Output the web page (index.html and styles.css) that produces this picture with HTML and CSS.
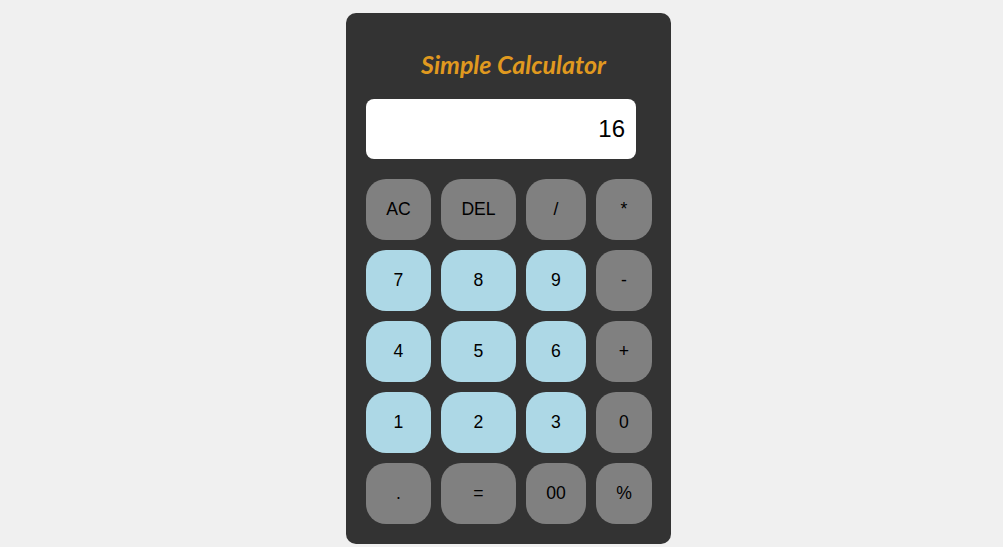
FILE: index.html
```html
<!DOCTYPE html>
<html lang="en">
<head>
<meta charset="utf-8">
<title>Simple Calculator</title>
<link rel="stylesheet" href="styles.css">
</head>
<body>
<div class="calc">
  <h1 class="title">Simple Calculator</h1>
  <div class="display">16</div>
  <div class="keys">
    <button class="key op">AC</button>
    <button class="key op">DEL</button>
    <button class="key op">/</button>
    <button class="key op">*</button>
    <button class="key num">7</button>
    <button class="key num">8</button>
    <button class="key num">9</button>
    <button class="key op">-</button>
    <button class="key num">4</button>
    <button class="key num">5</button>
    <button class="key num">6</button>
    <button class="key op">+</button>
    <button class="key num">1</button>
    <button class="key num">2</button>
    <button class="key num">3</button>
    <button class="key op">0</button>
    <button class="key op">.</button>
    <button class="key op">=</button>
    <button class="key op">00</button>
    <button class="key op">%</button>
  </div>
</div>
</body>
</html>
```
FILE: styles.css
```css
html, body {
  margin: 0;
  padding: 0;
}
body {
  background: #f0f0f0;
  font-family: "Liberation Sans", Arial, sans-serif;
  display: flex;
  justify-content: center;
  padding-top: 13px;
  padding-left: 14px;
}
.calc {
  width: 325px;
  box-sizing: border-box;
  background: #333333;
  border-radius: 10px;
  padding: 20px 19px 20px 20px;
}
.title {
  margin: 9px 0 13px 0;
  height: 44px;
  line-height: 44px;
  text-align: center;
  padding-left: 9px;
  font-family: "Lato", "Open Sans", sans-serif;
  font-style: italic;
  font-weight: 700;
  font-size: 25px;
  color: #e0991f;
}
.display {
  width: 270px;
  height: 60px;
  box-sizing: border-box;
  background: #ffffff;
  border-radius: 8px;
  text-align: right;
  padding-right: 11px;
  line-height: 60px;
  font-size: 24px;
  color: #000;
}
.keys {
  margin-top: 20px;
  display: grid;
  grid-template-columns: 65px 75px 60px 56px;
  grid-auto-rows: 61px;
  column-gap: 10px;
  row-gap: 10px;
}
.key {
  border: none;
  border-radius: 20px;
  font-family: "Liberation Sans", Arial, sans-serif;
  font-size: 17.6px;
  color: #000;
  padding: 0;
}
.op {
  background: #808080;
}
.num {
  background: #add8e6;
}
```
